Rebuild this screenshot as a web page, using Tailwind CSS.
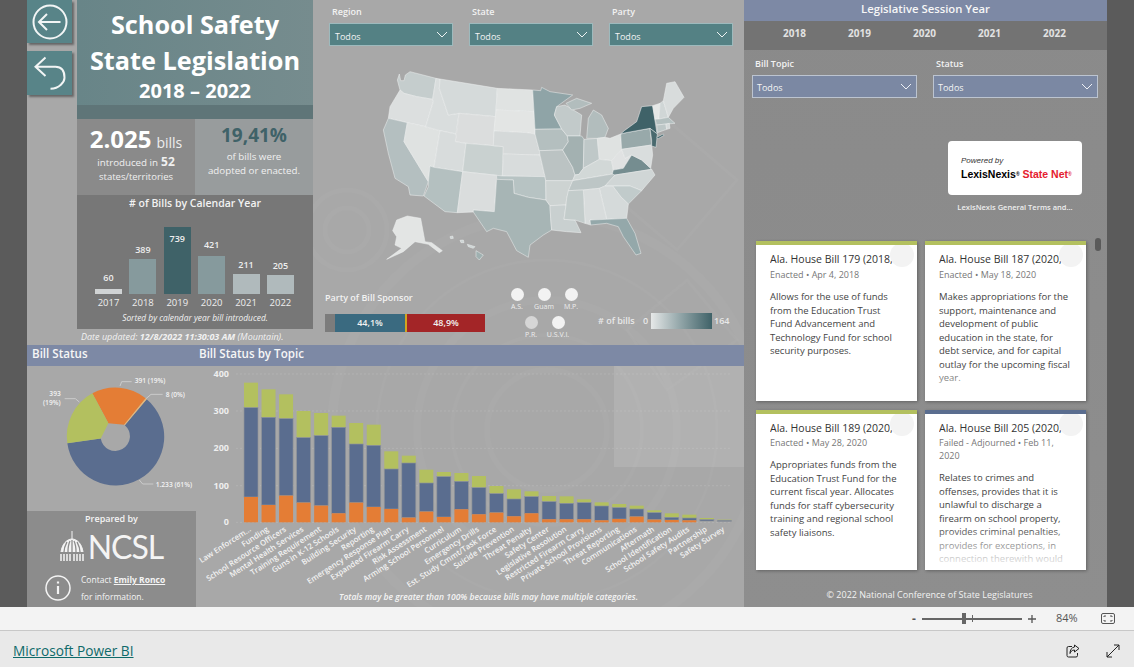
<!DOCTYPE html>
<html lang="en">
<head>
<meta charset="utf-8">
<title>School Safety State Legislation</title>
<script src="https://cdn.jsdelivr.net/npm/@tailwindcss/browser@4"></script>
</head>
<body class="w-[1134px] h-[667px] overflow-hidden bg-[#e9e9e9] font-['Open_Sans',sans-serif] text-white">

<main class="h-[607px] flex px-[27px] bg-[#5b5b5b]">
<div class="relative w-[1080px] h-[607px] flex overflow-hidden bg-[#a8a8a8]">

  <!-- faint seal texture behind everything -->
  <svg class="absolute left-0 top-0 w-[1080px] h-[607px]" viewBox="0 0 1080 607" fill="none" stroke="#fff" stroke-opacity=".025">
    <circle cx="520" cy="430" r="60" stroke-width="6"/><circle cx="520" cy="430" r="95" stroke-width="4"/><circle cx="520" cy="430" r="130" stroke-width="8"/><circle cx="520" cy="430" r="170" stroke-width="3"/><circle cx="520" cy="430" r="215" stroke-width="10"/>
    <circle cx="320" cy="230" r="22" stroke-width="5"/><circle cx="320" cy="230" r="40" stroke-width="5"/>
    <path d="M640 120l70 60-60 70-70-60zM660 280l50 60-70 50-40-60z" stroke-width="3"/>
  </svg>

  <!-- LEFT: everything but the right panel -->
  <div class="relative w-[717px] flex flex-col">
    <div class="h-[345px] flex">
      <!-- back buttons -->
      <div class="w-[50px] flex flex-col gap-[8px]">
        <div class="w-[45px] h-[43px] bg-[#588488] shadow-[2px_2px_2px_#666] flex items-center justify-center">
          <svg width="36" height="36" viewBox="0 0 36 36" fill="none" stroke="#f2f5f5" stroke-width="2"><circle cx="18" cy="18" r="16.500"/><path d="M28.500 18H7M15 10l-8 8 8 8"/></svg>
        </div>
        <div class="w-[45px] h-[44px] bg-[#588488] shadow-[2px_2px_2px_#666] flex items-center justify-center">
          <svg width="36" height="36" viewBox="0 0 36 36" fill="none" stroke="#f2f5f5" stroke-width="2"><path d="M13.500 2.500L3.500 11.700l10 9.300M3.500 11.700h20c8 0 9 7 9 11s-5 11-14 11"/></svg>
        </div>
      </div>

      <!-- title + stats + year chart -->
      <div class="w-[236px] flex flex-col">
        <div class="h-[105px] bg-gradient-to-r from-[#688588] to-[#768c8e] flex flex-col items-center pt-[6px] font-bold">
          <div class="text-[25.250px] leading-[36px]">School Safety</div>
          <div class="text-[25.250px] leading-[36px]">State Legislation</div>
          <div class="text-[20px] leading-[24px] mt-[1px]">2018 – 2022</div>
        </div>
        <div class="h-[14px] bg-[#5f7578]"></div>
        <div class="h-[76px] flex">
          <div class="w-[118px] bg-[#8a8a8a] flex flex-col items-center pt-[7px]">
            <div class="flex items-baseline gap-[5px] h-[26px]"><span class="text-[24px] font-bold leading-[26px]">2.025</span><span class="text-[14px] text-[#eee]">bills</span></div>
            <div class="text-[9.750px] leading-[14px] mt-[3px] flex items-baseline gap-[3px] text-[#f0f0f0]">introduced in <b class="text-[12px]">52</b></div>
            <div class="text-[9.500px] leading-[14px] text-[#f0f0f0]">states/territories</div>
          </div>
          <div class="w-[118px] bg-[#989c9d] flex flex-col items-center pt-[5px]">
            <div class="text-[19px] font-bold leading-[22px] text-[#3f6268]">19,41%</div>
            <div class="text-[9.750px] leading-[14px] mt-[4px] text-[#f0f0f0]">of bills were</div>
            <div class="text-[9.750px] leading-[14px] text-[#f0f0f0]">adopted or enacted.</div>
          </div>
        </div>
        <div class="h-[134px] bg-[#777777] flex flex-col">
          <div class="h-[17px] text-center text-[10.500px] font-semibold leading-[17px] text-[#f2f2f2]"># of Bills by Calendar Year</div>
          <div class="h-[82px] flex items-end gap-[7.4px] pl-[18px] text-[9px] font-semibold text-[#eee] text-center leading-[12px]">
            <div class="w-[27px]"><div class="mb-[5px]">60</div><div class="h-[5px] bg-[#d0d3d4]"></div></div>
            <div class="w-[27px]"><div class="mb-[3px]">389</div><div class="h-[35px] bg-[#869a9d]"></div></div>
            <div class="w-[27px] relative"><div class="absolute w-full top-[6px]">739</div><div class="h-[67px] bg-[#3f6268]"></div></div>
            <div class="w-[27px]"><div class="mb-[5px]">421</div><div class="h-[38px] bg-[#869a9d]"></div></div>
            <div class="w-[27px]"><div class="mb-[3px]">211</div><div class="h-[20px] bg-[#b0babc]"></div></div>
            <div class="w-[27px]"><div class="mb-[3px]">205</div><div class="h-[19px] bg-[#b0babc]"></div></div>
          </div>
          <div class="h-[18px] flex gap-[7.4px] pl-[18px] text-[9.500px] text-[#eee] text-center leading-[18px]">
            <div class="w-[27px]">2017</div><div class="w-[27px]">2018</div><div class="w-[27px]">2019</div><div class="w-[27px]">2020</div><div class="w-[27px]">2021</div><div class="w-[27px]">2022</div>
          </div>
          <div class="text-center text-[8.400px] italic leading-[13px] text-[#f2f2f2] mt-[-1px]">Sorted by calendar year bill introduced.</div>
        </div>
        <div class="h-[16px] pl-[4px] text-[9px] italic leading-[16px] text-[#f2f2f2] whitespace-nowrap">Date updated: <b>12/8/2022 11:30:03 AM</b> (Mountain).</div>
      </div>

      <!-- centre: filters, map, party -->
      <div class="w-[431px] flex flex-col">
        <div class="flex gap-[16px] pl-[16px] pt-[5px]">
          <div class="w-[124px]"><div class="h-[13px] pl-[3px] text-[9px] font-semibold leading-[13px] text-[#f2f2f2]">Region</div>
            <div class="mt-[5px] h-[23px] border border-[#9dbabd] bg-[#548184] flex items-center justify-between pl-[5px] pr-[4px] text-[9px] text-[#f4f4f4]"><span class="translate-y-[2px]">Todos</span><svg width="12" height="7" viewBox="0 0 12 7" fill="none" stroke="#eef3f3"><path d="M1 1l5 5 5-5"/></svg></div></div>
          <div class="w-[124px]"><div class="h-[13px] pl-[3px] text-[9px] font-semibold leading-[13px] text-[#f2f2f2]">State</div>
            <div class="mt-[5px] h-[23px] border border-[#9dbabd] bg-[#548184] flex items-center justify-between pl-[5px] pr-[4px] text-[9px] text-[#f4f4f4]"><span class="translate-y-[2px]">Todos</span><svg width="12" height="7" viewBox="0 0 12 7" fill="none" stroke="#eef3f3"><path d="M1 1l5 5 5-5"/></svg></div></div>
          <div class="w-[124px]"><div class="h-[13px] pl-[3px] text-[9px] font-semibold leading-[13px] text-[#f2f2f2]">Party</div>
            <div class="mt-[5px] h-[23px] border border-[#9dbabd] bg-[#548184] flex items-center justify-between pl-[5px] pr-[4px] text-[9px] text-[#f4f4f4]"><span class="translate-y-[2px]">Todos</span><svg width="12" height="7" viewBox="0 0 12 7" fill="none" stroke="#eef3f3"><path d="M1 1l5 5 5-5"/></svg></div></div>
        </div>

        <svg class="ml-[67px] mt-[14px] block" width="320" height="210" viewBox="0 0 960 630" stroke="#eef1f1" stroke-width="1.500" stroke-linejoin="round">
          <polygon fill="#c5cdcd" points="58,42 62,62 72,62 76,45 90,35 168,55 158,118 110,110 72,100 60,90 52,60"/>
          <polygon fill="#dcdfdf" points="60,90 72,100 110,110 158,118 160,125 137,200 82,188 25,175 30,140"/>
          <polygon fill="#b4bfc0" points="25,175 82,188 72,245 145,365 130,408 90,405 85,380 45,355 25,280 10,210"/>
          <polygon fill="#dfe2e1" points="82,188 137,200 180,212 162,322 150,318 145,365 72,245"/>
          <polygon fill="#d9dddd" points="168,55 180,57 178,85 205,165 237,160 228,222 180,212 137,200 160,125 158,118"/>
          <polygon fill="#d5dada" points="180,57 352,85 347,170 237,160 205,165 178,85"/>
          <polygon fill="#dbdddd" points="237,160 347,170 340,257 258,250 226,245"/>
          <polygon fill="#d8dcdc" points="180,212 228,222 226,245 258,250 248,335 162,322"/>
          <polygon fill="#c9d1d0" points="258,250 340,257 370,260 367,348 248,335"/>
          <polygon fill="#b4c0c0" points="162,322 248,335 232,458 195,455 132,408 145,380 145,365 150,318"/>
          <polygon fill="#dadddd" points="248,335 350,346 343,455 280,450 280,456 232,458"/>
          <polygon fill="#e0e3e2" points="352,85 458,90 462,155 348,150"/>
          <polygon fill="#e3e5e4" points="348,150 462,155 465,208 465,222 440,218 342,213"/>
          <polygon fill="#d5d9d9" points="342,213 440,218 465,222 478,272 480,285 370,282 370,260 340,257"/>
          <polygon fill="#d8dcdc" points="370,282 480,285 495,350 367,348"/>
          <polygon fill="#b7c3c3" points="350,346 367,348 495,350 497,362 498,420 445,412 402,400 400,360 350,358"/>
          <polygon fill="#a7b5b5" points="350,358 400,360 402,400 445,412 498,420 510,437 512,475 515,510 490,525 450,555 445,592 410,572 380,515 340,505 320,515 280,456 280,450 343,455"/>
          <polygon fill="#8fa4a7" points="458,90 482,92 485,82 510,95 578,105 530,140 523,165 545,207 465,208 462,155"/>
          <polygon fill="#b4bfbf" points="465,208 545,207 562,228 565,245 548,270 478,272 465,222"/>
          <polygon fill="#bbc3c3" points="478,272 548,270 578,322 585,345 578,362 497,362 495,350 480,285"/>
          <polygon fill="#cdd3d2" points="497,362 578,362 560,415 558,435 510,437 498,420"/>
          <polygon fill="#c9d0d0" points="510,437 558,435 552,478 585,480 603,518 560,515 515,510 512,475"/>
          <polygon fill="#c2caca" points="530,140 555,135 605,165 600,228 562,228 545,207 523,165"/>
          <polygon fill="#a3b1b1" points="565,245 562,228 605,228 612,238 610,325 597,343 585,345 578,322 548,270"/>
          <polygon fill="#bfc8c8" points="612,238 652,235 658,298 610,325"/>
          <polygon fill="#b2bdbd" points="620,235 652,235 675,232 685,205 665,165 640,150 625,175"/>
          <polygon fill="#b2bdbd" points="558,130 590,115 635,130 600,145 575,150"/>
          <polygon fill="#dfe2e1" points="652,235 675,232 690,235 722,222 725,268 695,302 658,298"/>
          <polygon fill="#d2d8d7" points="610,325 658,298 695,302 700,330 697,342 578,362 585,345 597,343"/>
          <polygon fill="#bdc6c6" points="578,362 697,342 705,345 675,378 658,385 610,390 565,392"/>
          <polygon fill="#e0e2e2" points="695,302 725,268 735,295 755,285 730,325 700,330"/>
          <polygon fill="#758d90" points="697,342 700,330 730,325 755,285 785,300 812,325 815,328 705,345"/>
          <polygon fill="#d0d6d6" points="705,345 815,328 825,345 785,392 750,378 700,378 675,378"/>
          <polygon fill="#c1cbcb" points="698,378 750,378 785,392 745,432 722,410"/>
          <polygon fill="#d5dada" points="658,385 675,378 698,378 722,410 745,432 740,475 680,478"/>
          <polygon fill="#d8dcdc" points="610,390 658,385 680,478 630,480 632,495 615,490"/>
          <polygon fill="#c3cccb" points="565,392 610,390 615,490 585,480 552,478 558,435 560,415"/>
          <polygon fill="#94a8aa" points="630,480 680,478 740,475 765,520 783,580 768,585 730,530 715,500 680,490 632,495"/>
          <polygon fill="#98a9aa" points="722,222 738,218 810,205 815,255 725,268"/>
          <polygon fill="#d9dddd" points="725,268 815,255 818,285 812,325 785,300 755,285 735,295"/>
          <polygon fill="#3f6268" points="733,212 770,185 785,140 818,137 830,215 832,222 810,205 738,218 722,222"/>
          <polygon fill="#49696e" points="810,205 832,222 828,262 815,258 815,240"/>
          <polygon fill="#e5e7e6" points="818,137 840,130 837,177 825,178"/>
          <polygon fill="#d0d6d6" points="840,130 850,122 865,172 837,177"/>
          <polygon fill="#d8dcdc" points="850,122 860,70 885,65 912,112 880,145 865,172"/>
          <polygon fill="#b4c0c0" points="825,178 837,177 865,172 885,190 860,192 830,195"/>
          <polygon fill="#bdc7c7" points="830,195 858,192 860,208 832,218"/>
          <polygon fill="#d5dada" points="858,192 868,190 870,205 860,208"/>
          <polygon fill="#3f6268" points="830,232 850,222 852,226 834,236"/>
          <polygon fill="#e3e5e4" points="50,480 82,468 122,475 135,545 155,548 187,572 178,578 145,553 105,545 70,575 20,598 65,565 45,555 50,530 38,512"/>
          <polygon fill="#9fb0b0" points="288,572 310,585 298,600 288,590"/>
          <polygon fill="#cdd5d5" points="210,530 218,528 220,535 212,536"/>
          <polygon fill="#cdd5d5" points="240,541 250,540 252,548 243,548"/>
          <polygon fill="#cdd5d5" points="262,553 285,560 280,565 265,560"/>
        </svg>

        <div class="flex-1 flex pl-[12px]">
          <div class="w-[160px] pt-[21px]">
            <div class="h-[13px] text-[9px] font-semibold leading-[13px] text-[#f2f2f2]">Party of Bill Sponsor</div>
            <div class="mt-[10px] w-[160px] h-[18px] flex text-[9px] font-semibold leading-[18px] text-center text-[#f2f2f2]">
              <div class="w-[10px] bg-[#7c7c7c]"></div>
              <div class="w-[70px] bg-[#3a6a80]">44,1%</div>
              <div class="w-[2px] bg-[#d0a520]"></div>
              <div class="w-[78px] bg-[#a32527]">48,9%</div>
            </div>
          </div>
          <div class="w-[113px] pl-[19px] pt-[18px] text-[7px] text-center leading-[11px] text-[#eee]">
            <div class="flex gap-[1px]">
              <div class="w-[26px]"><div class="mx-auto w-[13px] h-[13px] rounded-full bg-[#f2f2f2]"></div>A.S.</div>
              <div class="w-[26px]"><div class="mx-auto w-[13px] h-[13px] rounded-full bg-[#f2f2f2]"></div>Guam</div>
              <div class="w-[26px]"><div class="mx-auto w-[13px] h-[13px] rounded-full bg-[#f2f2f2]"></div>M.P.</div>
            </div>
            <div class="flex gap-[1px] pl-[14px] mt-[4px]">
              <div class="w-[26px]"><div class="mx-auto w-[13px] h-[13px] rounded-full bg-[#d6d6d6]"></div>P.R.</div>
              <div class="w-[26px]"><div class="mx-auto w-[13px] h-[13px] rounded-full bg-[#f2f2f2]"></div>U.S.V.I.</div>
            </div>
          </div>
          <div class="flex items-start pt-[43px] text-[9px] font-semibold leading-[16px] text-[#e8e8e8] whitespace-nowrap">
            <span class="w-[45px]"># of bills</span><span class="w-[8px]">0</span>
            <div class="w-[61px] h-[16px] bg-gradient-to-r from-[#e6e8e8] via-[#8fa3a6] to-[#3f6268]"></div>
            <span class="ml-[2px]">164</span>
          </div>
        </div>
      </div>
    </div>

    <!-- section bar -->
    <div class="h-[21px] bg-[#7d89a5] flex text-[11.600px] font-semibold leading-[18px] text-[#f6f6f6]">
      <div class="w-[172px] pl-[5px]">Bill Status</div>
      <div>Bill Status by Topic</div>
    </div>

    <div class="flex-1 flex">
      <div class="w-[169px] flex flex-col">
        <!-- donut -->
        <svg class="block" width="169" height="145" viewBox="81 78 507 435">
          <path fill="#5a6d8f" d="M440 178A146 146 0 1 1 202 310L302.300 295.400A44 44 0 1 0 374.500 255.400Z"/>
          <path fill="#e47d35" d="M277 160A146 146 0 0 1 437 175L372.500 254.500L325.200 250.100Z"/>
          <path fill="#e8b877" d="M437 175L440 178L374.500 255.400L372.500 254.500Z"/>
          <path fill="#b3c05f" d="M277 160A146 146 0 0 0 202 310L302.300 295.400L325.200 250.100Z"/>
          <g fill="none" stroke="#ddd" stroke-width="2">
            <path d="M360 138l5-13h30M438 176l15-13h35M238 186l-12-10h-32M418 420l10 12h32"/>
          </g>
          <g fill="#f2f2f2" font-size="20" font-weight="600">
            <text x="404" y="130">391 (19%)</text>
            <text x="497" y="170">8 (0%)</text>
            <text x="148" y="167">393</text>
            <text x="129" y="195">(19%)</text>
            <text x="467" y="440">1.233 (61%)</text>
          </g>
        </svg>
        <!-- prepared by -->
        <div class="flex-1 bg-[#8c8c8c] flex flex-col items-center text-[#f4f4f4]">
          <div class="text-[9px] font-semibold leading-[13px] mt-[1px]">Prepared by</div>
          <div class="flex items-end gap-[4px] h-[32px] mt-[5px]">
            <svg width="24" height="31" viewBox="0 0 24 31" fill="none" stroke="#f4f4f4">
              <path d="M12 0v8" stroke-width="1"/>
              <path d="M1 21C2 13 7 8 12 8s10 5 11 13" stroke-width="1" fill="#f4f4f4"/>
              <path d="M4 21c0-5 2-8 3-10M8 21c0-5 1-9 2-11M12 21V9M16 21c0-5-1-9-2-11M20 21c0-5-2-8-3-10" stroke="#8c8c8c" stroke-width="1.300"/>
              <path d="M1 23v7M4 23v7M7 23v7M10 23v7M14 23v7M17 23v7M20 23v7M23 23v7" stroke-width="1.500"/>
            </svg>
            <span class="font-['Lato',sans-serif] text-[32px] leading-[32px] tracking-[-1px] h-[31px]">NCSL</span>
          </div>
          <div class="flex items-center gap-[10px] self-start pl-[18px] mt-[9px]">
            <svg width="26" height="26" viewBox="0 0 26 26" fill="none" stroke="#f4f4f4" stroke-width="1.500"><circle cx="13" cy="13" r="12"/><path d="M13 11v8" stroke-width="2.200"/><path d="M13 6.500v2" stroke-width="2.200"/></svg>
            <div class="text-[8.500px] leading-[17px]">
              <div>Contact <b class="underline">Emily Ronco</b></div>
              <div>for information.</div>
            </div>
          </div>
        </div>
      </div>

      <!-- stacked chart -->
      <div class="relative flex-1">
        <div class="absolute right-0 top-0 w-[130px] h-[101px] bg-white/10"></div>
        <svg class="absolute left-0 top-0" width="548" height="241" viewBox="196 366 548 241">
          <g transform="translate(195 340) scale(.33333)">
            <g stroke="#e4e4e4" stroke-opacity=".5" stroke-width="3" stroke-dasharray="2 10">
              <path d="M125 102H1610M125 213H1610M125 325H1610M125 437H1610M125 547H1610"/>
            </g>
            <g fill="#eeeeee" font-size="27" font-weight="700" text-anchor="end">
              <text x="102" y="111">400</text><text x="102" y="222">300</text><text x="102" y="334">200</text><text x="102" y="446">100</text><text x="102" y="556">0</text>
            </g>
            <g fill="#b3c05f">
              <rect x="147" y="128" width="42" height="75"/><rect x="199.600" y="148" width="42" height="84"/><rect x="252.200" y="163" width="42" height="73"/><rect x="304.800" y="213" width="42" height="80"/><rect x="357.400" y="219" width="42" height="68"/><rect x="410" y="227" width="42" height="35"/><rect x="462.600" y="249" width="42" height="63"/><rect x="515.200" y="254" width="42" height="62"/><rect x="567.800" y="334" width="42" height="53"/><rect x="620.400" y="347" width="42" height="22"/><rect x="673" y="389" width="42" height="40"/><rect x="725.600" y="396" width="42" height="14"/><rect x="778.200" y="399" width="42" height="25"/><rect x="830.800" y="408" width="42" height="35"/><rect x="883.400" y="438" width="42" height="23"/><rect x="936" y="448" width="42" height="29"/><rect x="988.600" y="454" width="42" height="16"/><rect x="1041.200" y="468" width="42" height="17"/><rect x="1093.800" y="469" width="42" height="21"/><rect x="1146.400" y="478" width="42" height="10"/><rect x="1199" y="487" width="42" height="11"/><rect x="1251.600" y="492" width="42" height="11"/><rect x="1304.200" y="497" width="42" height="10"/><rect x="1356.800" y="511" width="42" height="7"/><rect x="1409.400" y="520" width="42" height="12"/><rect x="1462" y="524" width="42" height="10"/><rect x="1514.600" y="534" width="42" height="5"/><rect x="1567.200" y="539" width="42" height="2"/>
            </g>
            <g fill="#5a6d8f" stroke="#8f9499" stroke-width="2">
              <rect x="147" y="203" width="42" height="268"/><rect x="199.600" y="232" width="42" height="263"/><rect x="252.200" y="236" width="42" height="231"/><rect x="304.800" y="293" width="42" height="195"/><rect x="357.400" y="287" width="42" height="210"/><rect x="410" y="262" width="42" height="258"/><rect x="462.600" y="312" width="42" height="176"/><rect x="515.200" y="316" width="42" height="185"/><rect x="567.800" y="387" width="42" height="120"/><rect x="620.400" y="369" width="42" height="164"/><rect x="673" y="429" width="42" height="86"/><rect x="725.600" y="410" width="42" height="121"/><rect x="778.200" y="424" width="42" height="84"/><rect x="830.800" y="443" width="42" height="80"/><rect x="883.400" y="461" width="42" height="57"/><rect x="936" y="477" width="42" height="52"/><rect x="988.600" y="470" width="42" height="50"/><rect x="1041.200" y="485" width="42" height="53"/><rect x="1093.800" y="490" width="42" height="48"/><rect x="1146.400" y="488" width="42" height="50"/><rect x="1199" y="498" width="42" height="43"/><rect x="1251.600" y="503" width="42" height="34"/><rect x="1304.200" y="507" width="42" height="23"/><rect x="1356.800" y="518" width="42" height="21"/><rect x="1409.400" y="532" width="42" height="8"/><rect x="1462" y="534" width="42" height="7"/><rect x="1514.600" y="539" width="42" height="4"/><rect x="1567.200" y="541" width="42" height="3"/>
            </g>
            <g fill="#e47d35">
              <rect x="147" y="471" width="42" height="76"/><rect x="199.600" y="495" width="42" height="52"/><rect x="252.200" y="467" width="42" height="80"/><rect x="304.800" y="488" width="42" height="59"/><rect x="357.400" y="497" width="42" height="50"/><rect x="410" y="520" width="42" height="27"/><rect x="462.600" y="488" width="42" height="59"/><rect x="515.200" y="501" width="42" height="46"/><rect x="567.800" y="507" width="42" height="40"/><rect x="620.400" y="533" width="42" height="14"/><rect x="673" y="515" width="42" height="32"/><rect x="725.600" y="531" width="42" height="16"/><rect x="778.200" y="508" width="42" height="39"/><rect x="830.800" y="523" width="42" height="24"/><rect x="883.400" y="518" width="42" height="29"/><rect x="936" y="529" width="42" height="18"/><rect x="988.600" y="520" width="42" height="27"/><rect x="1041.200" y="538" width="42" height="9"/><rect x="1093.800" y="538" width="42" height="9"/><rect x="1146.400" y="538" width="42" height="9"/><rect x="1199" y="541" width="42" height="6"/><rect x="1251.600" y="537" width="42" height="10"/><rect x="1304.200" y="530" width="42" height="17"/><rect x="1356.800" y="539" width="42" height="8"/><rect x="1409.400" y="540" width="42" height="7"/><rect x="1462" y="541" width="42" height="6"/>
            </g>
            <g fill="#f2f2f2" font-size="23.500" font-weight="600" text-anchor="end">
              <text transform="translate(170 572) rotate(-33)">Law Enforcem...</text>
              <text transform="translate(222.600 572) rotate(-33)">Funding</text>
              <text transform="translate(275.200 572) rotate(-33)">School Resource Officers</text>
              <text transform="translate(327.800 572) rotate(-33)">Mental Health Services</text>
              <text transform="translate(380.400 572) rotate(-33)">Training Requirement</text>
              <text transform="translate(433 572) rotate(-33)">Guns in K-12 Schools</text>
              <text transform="translate(485.600 572) rotate(-33)">Building Security</text>
              <text transform="translate(538.200 572) rotate(-33)">Reporting</text>
              <text transform="translate(590.800 572) rotate(-33)">Emergency Response Plan</text>
              <text transform="translate(643.400 572) rotate(-33)">Expanded Firearm Carry</text>
              <text transform="translate(696 572) rotate(-33)">Risk Assessment</text>
              <text transform="translate(748.600 572) rotate(-33)">Arming School Personnel</text>
              <text transform="translate(801.200 572) rotate(-33)">Curriculum</text>
              <text transform="translate(853.800 572) rotate(-33)">Emergency Drills</text>
              <text transform="translate(906.400 572) rotate(-33)">Est. Study Cmmt/Task Force</text>
              <text transform="translate(959 572) rotate(-33)">Suicide Prevention</text>
              <text transform="translate(1011.600 572) rotate(-33)">Threat Penalty</text>
              <text transform="translate(1064.200 572) rotate(-33)">Safety Center</text>
              <text transform="translate(1116.800 572) rotate(-33)">Legislative Resolution</text>
              <text transform="translate(1169.400 572) rotate(-33)">Restricted Firearm Carry</text>
              <text transform="translate(1222 572) rotate(-33)">Private School Provisions</text>
              <text transform="translate(1274.600 572) rotate(-33)">Threat Reporting</text>
              <text transform="translate(1327.200 572) rotate(-33)">Communications</text>
              <text transform="translate(1379.800 572) rotate(-33)">Aftermath</text>
              <text transform="translate(1432.400 572) rotate(-33)">School Identification</text>
              <text transform="translate(1485 572) rotate(-33)">School Safety Audits</text>
              <text transform="translate(1537.600 572) rotate(-33)">Partnership</text>
              <text transform="translate(1590.200 572) rotate(-33)">Safety Survey</text>
            </g>
          </g>
        </svg>
        <div class="absolute left-[143px] bottom-[4px] text-[8.500px] italic font-semibold leading-[12px] text-[#f4f4f4] whitespace-nowrap">Totals may be greater than 100% because bills may have multiple categories.</div>
      </div>
    </div>
  </div>

  <!-- RIGHT PANEL -->
  <div class="relative w-[363px] flex flex-col bg-gradient-to-b from-[#8a8a8a] to-[#8e8e8e]">
    <div class="h-[21px] bg-[#7d89a5] text-center text-[11.300px] font-semibold leading-[18px] text-[#f6f6f6]">Legislative Session Year</div>
    <div class="h-[29px] bg-[#737373] flex pl-[18px] text-[10px] font-bold leading-[25px] text-[#e2e2e2]">
      <div class="w-[65px] text-center">2018</div><div class="w-[65px] text-center">2019</div><div class="w-[65px] text-center">2020</div><div class="w-[65px] text-center">2021</div><div class="w-[65px] text-center">2022</div>
    </div>
    <div class="flex gap-[16px] pl-[8px] pt-[7px]">
      <div class="w-[165px]"><div class="h-[13px] pl-[3px] text-[9px] font-semibold leading-[13px] text-[#f2f2f2]">Bill Topic</div>
        <div class="mt-[5px] h-[23px] border border-[#bcc4d0] bg-[#7b88a3] flex items-center justify-between pl-[4px] pr-[4px] text-[9px] text-[#f4f4f4]"><span class="translate-y-[1px]">Todos</span><svg width="12" height="7" viewBox="0 0 12 7" fill="none" stroke="#eef0f5"><path d="M1 1l5 5 5-5"/></svg></div></div>
      <div class="w-[165px]"><div class="h-[13px] pl-[3px] text-[9px] font-semibold leading-[13px] text-[#f2f2f2]">Status</div>
        <div class="mt-[5px] h-[23px] border border-[#bcc4d0] bg-[#7b88a3] flex items-center justify-between pl-[4px] pr-[4px] text-[9px] text-[#f4f4f4]"><span class="translate-y-[1px]">Todos</span><svg width="12" height="7" viewBox="0 0 12 7" fill="none" stroke="#eef0f5"><path d="M1 1l5 5 5-5"/></svg></div></div>
    </div>

    <div class="ml-[204px] mt-[43px] w-[134px] h-[54px] rounded-[4px] bg-white flex flex-col justify-center pl-[13px] text-black">
      <div class="text-[8px] italic leading-[12px] font-['Liberation_Sans',sans-serif] text-[#333]">Powered by</div>
      <div class="text-[10.500px] font-semibold leading-[14px] whitespace-nowrap font-['Liberation_Sans',sans-serif]">LexisNexis<sup class="text-[5px]">®</sup> <span class="text-[#e5202e]">State Net<sup class="text-[5px]">®</sup></span></div>
    </div>
    <div class="ml-[204px] w-[134px] mt-[7px] h-[10px] text-center text-[7.500px] font-semibold leading-[10px] text-[#eeeeee] whitespace-nowrap">LexisNexis General Terms and...</div>

    <!-- cards -->
    <div class="ml-[12px] mt-[29px] grid grid-cols-[161px_161px] gap-x-[8px] gap-y-[9px] text-[#444]">
      <article class="relative h-[160px] overflow-hidden bg-white border-t-[4px] border-[#b3c05f] shadow-[1px_1px_3px_rgba(0,0,0,.3)] pl-[14px] pr-[8px]">
        <div class="absolute w-[24px] h-[24px] rounded-full bg-[#f3f3f3] left-[134px] top-[-2px]"></div>
        <div class="text-[10.500px] leading-[14px] mt-[7px] whitespace-nowrap overflow-hidden w-[124px] text-[#333]">Ala. House Bill 179 (2018,</div>
        <div class="text-[9px] leading-[13px] mt-[2px] text-[#777]">Enacted • Apr 4, 2018</div>
        <p class="text-[9.500px] leading-[13.5px] mt-[9px] whitespace-nowrap">Allows for the use of funds<br>from the Education Trust<br>Fund Advancement and<br>Technology Fund for school<br>security purposes.</p>
      </article>
      <article class="relative h-[160px] overflow-hidden bg-white border-t-[4px] border-[#b3c05f] shadow-[1px_1px_3px_rgba(0,0,0,.3)] pl-[14px] pr-[8px]">
        <div class="absolute w-[24px] h-[24px] rounded-full bg-[#f3f3f3] left-[134px] top-[-2px]"></div>
        <div class="text-[10.500px] leading-[14px] mt-[7px] whitespace-nowrap overflow-hidden w-[125px] text-[#333]">Ala. House Bill 187 (2020,</div>
        <div class="text-[9px] leading-[13px] mt-[2px] text-[#777]">Enacted • May 18, 2020</div>
        <p class="text-[9.500px] leading-[13.5px] mt-[9px] whitespace-nowrap">Makes appropriations for the<br>support, maintenance and<br>development of public<br>education in the state, for<br>debt service, and for capital<br>outlay for the upcoming fiscal<br>year.</p>
        <div class="absolute left-0 right-0 bottom-0 h-[34px] bg-gradient-to-b from-white/0 to-white"></div>
      </article>
      <article class="relative h-[160px] overflow-hidden bg-white border-t-[4px] border-[#b3c05f] shadow-[1px_1px_3px_rgba(0,0,0,.3)] pl-[14px] pr-[8px]">
        <div class="absolute w-[24px] h-[24px] rounded-full bg-[#f3f3f3] left-[134px] top-[-2px]"></div>
        <div class="text-[10.500px] leading-[14px] mt-[7px] whitespace-nowrap overflow-hidden w-[125px] text-[#333]">Ala. House Bill 189 (2020,</div>
        <div class="text-[9px] leading-[13px] mt-[1px] text-[#777]">Enacted • May 28, 2020</div>
        <p class="text-[9.500px] leading-[13.5px] mt-[9px] whitespace-nowrap">Appropriates funds from the<br>Education Trust Fund for the<br>current fiscal year. Allocates<br>funds for staff cybersecurity<br>training and regional school<br>safety liaisons.</p>
      </article>
      <article class="relative h-[160px] overflow-hidden bg-white border-t-[4px] border-[#5a6d8f] shadow-[1px_1px_3px_rgba(0,0,0,.3)] pl-[14px] pr-[8px]">
        <div class="absolute w-[24px] h-[24px] rounded-full bg-[#f3f3f3] left-[134px] top-[-2px]"></div>
        <div class="text-[10.500px] leading-[14px] mt-[7px] whitespace-nowrap overflow-hidden w-[125px] text-[#333]">Ala. House Bill 205 (2020,</div>
        <div class="text-[9px] leading-[13px] mt-[1px] text-[#777]">Failed - Adjourned • Feb 11,<br>2020</div>
        <p class="text-[9.500px] leading-[13.5px] mt-[9px] whitespace-nowrap">Relates to crimes and<br>offenses, provides that it is<br>unlawful to discharge a<br>firearm on school property,<br>provides criminal penalties,<br>provides for exceptions, in<br>connection therewith would</p>
        <div class="absolute left-0 right-0 bottom-0 h-[44px] bg-gradient-to-b from-white/0 to-white"></div>
      </article>
    </div>
    <div class="absolute left-[351px] top-[238px] w-[6px] h-[13px] rounded-[3px] bg-[#5a5a5a]"></div>
    <div class="mt-[19px] pl-[8px] text-center text-[9px] leading-[12px] text-[#f2f2f2]">© 2022 National Conference of State Legislatures</div>
  </div>
</div>
</main>

<!-- zoom bar -->
<div class="h-[24px] bg-[#f3f3f3] border-b border-[#c8c8c8] flex items-center justify-end text-[#555]">
  <span class="w-[6px] text-[12px] font-bold leading-[20px]">-</span>
  <div class="relative ml-[4px] w-[100px] h-[2px] bg-[#666]">
    <div class="absolute left-[40px] top-[-5px] w-[4px] h-[11px] bg-[#666]"></div>
    <div class="absolute left-[50px] top-[-3px] w-[1px] h-[7px] bg-[#666]"></div>
  </div>
  <svg class="ml-[5px]" width="10" height="10" viewBox="0 0 10 10" stroke="#555" stroke-width="1.300"><path d="M5 1v8M1 5h8"/></svg>
  <span class="ml-[19px] w-[24px] text-[11px]">84%</span>
  <svg class="ml-[21px] mr-[19px]" width="14" height="11" viewBox="0 0 14 11" fill="none" stroke="#555"><rect x=".5" y=".5" width="13" height="10" rx="1.500"/><path d="M3 4V3h2M9 3h2v1M3 7v1h2M9 8h2V7"/></svg>
</div>

<!-- footer -->
<div class="h-[36px] bg-[#e9e9e9] flex items-center pl-[13px] pr-[14px] pt-[3px]">
  <a class="text-[13.700px] underline text-[#0e6a6a] leading-[18px]">Microsoft Power BI</a>
  <svg class="ml-auto" width="14" height="14" viewBox="0 0 14 14" fill="none" stroke="#222"><path d="M6 2.500H2.500a1.500 1.500 0 0 0-1.500 1.500v7.500a1.500 1.500 0 0 0 1.500 1.500h7.500a1.500 1.500 0 0 0 1.500-1.500V9"/><path d="M8.500 1l4.500 3.500-4.500 3.500V6C6 6 4.500 7.500 4 9.500 4 6 5.500 3.500 8.500 3z"/></svg>
  <svg class="ml-[26px]" width="14" height="14" viewBox="0 0 14 14" fill="none" stroke="#222"><path d="M1 13L13 1M8 1h5v5M1 8v5h5"/></svg>
</div>
</body>
</html>
